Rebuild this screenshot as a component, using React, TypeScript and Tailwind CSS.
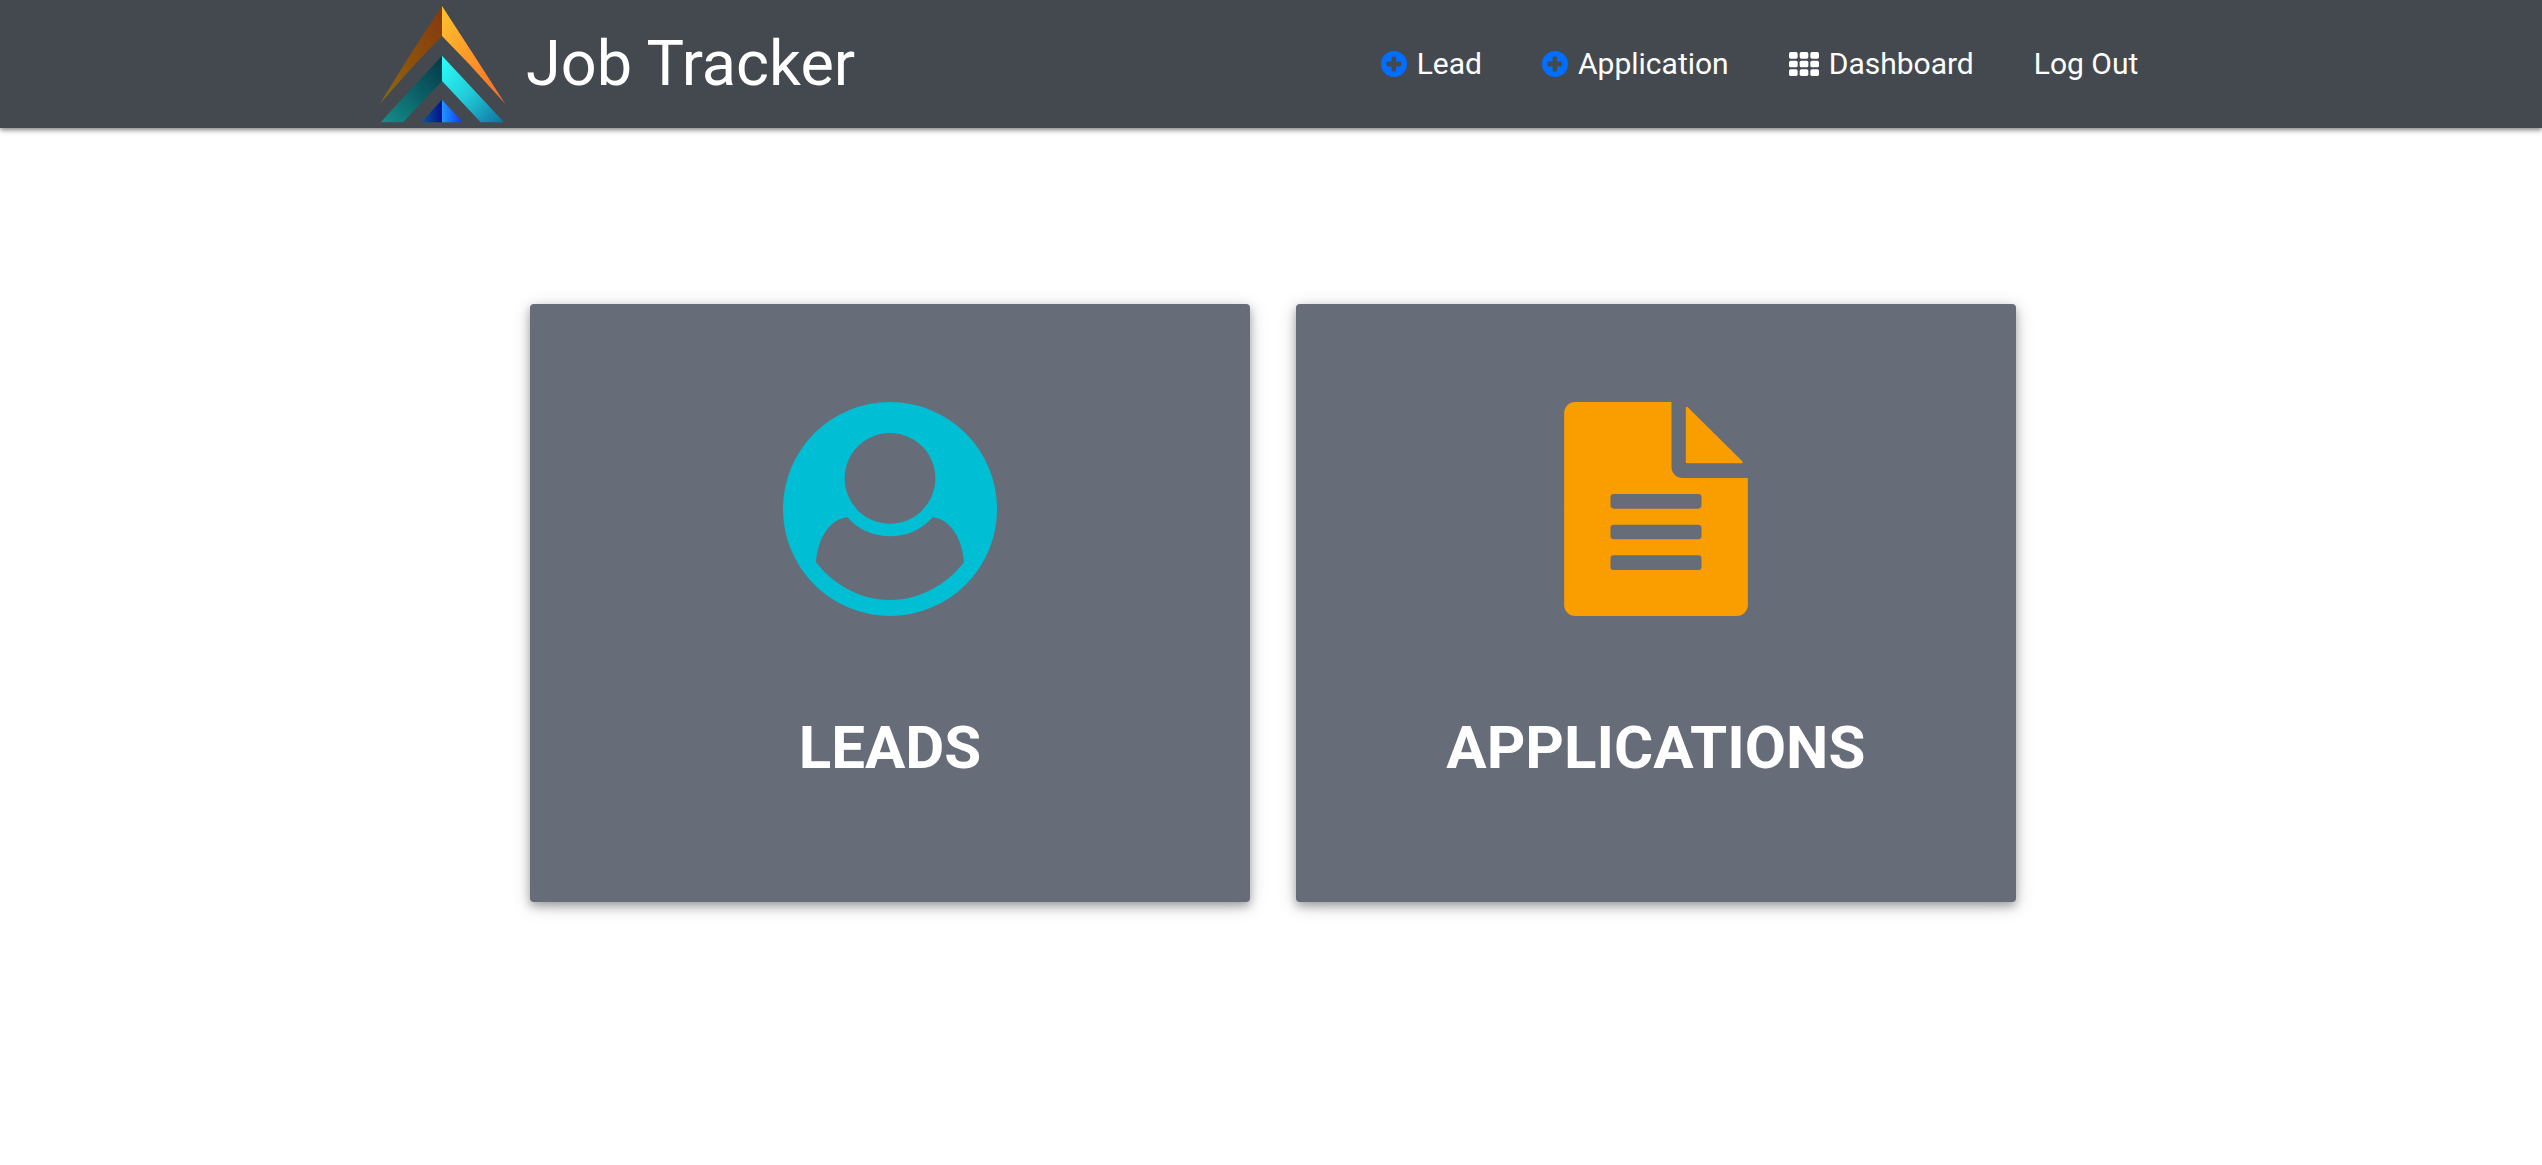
import type { ReactNode } from "react";

function Logo() {
  return (
    <svg viewBox="54 12 384 360" className="h-[120px] w-[128px] shrink-0" aria-hidden="true">
      <defs>
        <linearGradient id="orangeDark" x1="0" y1="1" x2="1" y2="0">
          <stop offset="0" stopColor="#8a6d10" />
          <stop offset="0.5" stopColor="#8c4f0c" />
          <stop offset="1" stopColor="#86380e" />
        </linearGradient>
        <linearGradient id="orangeLight" x1="0" y1="0" x2="1" y2="1">
          <stop offset="0" stopColor="#fdc32d" />
          <stop offset="0.6" stopColor="#fd8c28" />
          <stop offset="1" stopColor="#f26a28" />
        </linearGradient>
        <linearGradient id="tealDark" x1="0" y1="1" x2="1" y2="0">
          <stop offset="0" stopColor="#15908c" />
          <stop offset="0.5" stopColor="#0b6268" />
          <stop offset="1" stopColor="#043848" />
        </linearGradient>
        <linearGradient id="tealLight" x1="0" y1="0" x2="1" y2="1">
          <stop offset="0" stopColor="#2bfffb" />
          <stop offset="0.5" stopColor="#22cbd8" />
          <stop offset="1" stopColor="#0e709f" />
        </linearGradient>
        <linearGradient id="blueDark">
          <stop offset="0" stopColor="#075a9c" />
          <stop offset="1" stopColor="#04128c" />
        </linearGradient>
        <linearGradient id="blueLight">
          <stop offset="0" stopColor="#1f96ff" />
          <stop offset="1" stopColor="#1038fb" />
        </linearGradient>
      </defs>
      <path d="M246 18V108L160 198L59 312L150 165Z" fill="url(#orangeDark)" />
      <path d="M246 18L340 163L436 312L330 195L246 108Z" fill="url(#orangeLight)" />
      <path d="M246 167V243L130 367H62Z" fill="url(#tealDark)" />
      <path d="M246 167L432 367H362L246 243Z" fill="url(#tealLight)" />
      <path d="M246 299V367H184Z" fill="url(#blueDark)" />
      <path d="M246 299L308 367H246Z" fill="url(#blueLight)" />
    </svg>
  );
}

function PlusIcon() {
  return (
    <svg viewBox="0 0 76 76" className="size-[26px]" fill="#006fff" aria-hidden="true">
      <path
        fillRule="evenodd"
        d="M38 0a38 38 0 1 1 0 76a38 38 0 1 1 0-76zM35 16q-4 0-4 4v11H20q-4 0-4 4v6q0 4 4 4h11v11q0 4 4 4h5q4 0 4-4V45h11q4 0 4-4v-6q0-4-4-4H44V20q0-4-4-4z"
      />
    </svg>
  );
}

function GridIcon() {
  return (
    <svg viewBox="0 0 90 72" className="h-6 w-[30px]" fill="white" aria-hidden="true">
      {[0, 26, 52].map((y) =>
        [0, 32, 64].map((x) => <rect key={`${x}-${y}`} x={x} y={y} width="26" height="20" rx="5" />),
      )}
    </svg>
  );
}

function PersonIcon() {
  return (
    <svg viewBox="71 67 642 642" className="size-[214px]" fill="#00bed3" aria-hidden="true">
      <path
        fillRule="evenodd"
        d="M392 67a321 321 0 1 1 0 642a321 321 0 1 1 0-642zM392 160a136 136 0 1 0 0 272a136 136 0 1 0 0-272zM264 413C216 417 176 470 170 547C222 615 302 661 392 661S562 615 614 547C608 470 568 417 520 413A172 172 0 0 1 264 413z"
      />
    </svg>
  );
}

function DocumentIcon() {
  return (
    <svg viewBox="71 67 551 642" className="h-[214px] w-[184px]" fill="#fa9e00" aria-hidden="true">
      <path
        fillRule="evenodd"
        d="M104 67H393V262A33 33 0 0 0 426 295H622V676A33 33 0 0 1 589 709H104A33 33 0 0 1 71 676V100A33 33 0 0 1 104 67zM220 343q-10 0-10 10v24q0 10 10 10H473q10 0 10-10V353q0-10-10-10zM220 435q-10 0-10 10v24q0 10 10 10H473q10 0 10-10V445q0-10-10-10zM220 527q-10 0-10 10v24q0 10 10 10H473q10 0 10-10V537q0-10-10-10z"
      />
      <path d="M436 85q0-7 6-2L604 243q6 8-2 8H440q-4 0-4-4z" />
    </svg>
  );
}

function NavLink({ icon, children }: { icon?: ReactNode; children: ReactNode }) {
  return (
    <a href="#" className="flex items-center gap-[10px] px-[30px]">
      {icon}
      {children}
    </a>
  );
}

function Tile({ icon, title }: { icon: ReactNode; title: string }) {
  return (
    <a
      href="#"
      className="flex flex-col items-center rounded bg-[#666c78] pt-[98px] pb-[114px] shadow-[0_4px_10px_0_rgba(0,0,0,0.3),0_4px_20px_0_rgba(0,0,0,0.16)]"
    >
      {icon}
      <h2 className="mt-[92px] text-[60px] leading-[80px] font-bold">{title}</h2>
    </a>
  );
}

export default function App() {
  return (
    <div className="min-h-screen bg-white font-[Roboto,sans-serif] text-white">
      <header className="flex h-32 items-center justify-between bg-[#44494f] pr-[14.7%] pl-[14.87%] shadow-[0_2px_5px_0_rgba(0,0,0,0.5)]">
        <a href="#" className="flex items-center gap-5">
          <Logo />
          <span className="text-[63px] leading-[72px]">Job Tracker</span>
        </a>
        <nav className="flex text-[30px] leading-9">
          <NavLink icon={<PlusIcon />}>Lead</NavLink>
          <NavLink icon={<PlusIcon />}>Application</NavLink>
          <NavLink icon={<GridIcon />}>Dashboard</NavLink>
          <NavLink>Log Out</NavLink>
        </nav>
      </header>
      <main className="grid grid-cols-2 gap-[46px] pt-44 pr-[20.7%] pl-[20.85%]">
        <Tile icon={<PersonIcon />} title="LEADS" />
        <Tile icon={<DocumentIcon />} title="APPLICATIONS" />
      </main>
    </div>
  );
}
